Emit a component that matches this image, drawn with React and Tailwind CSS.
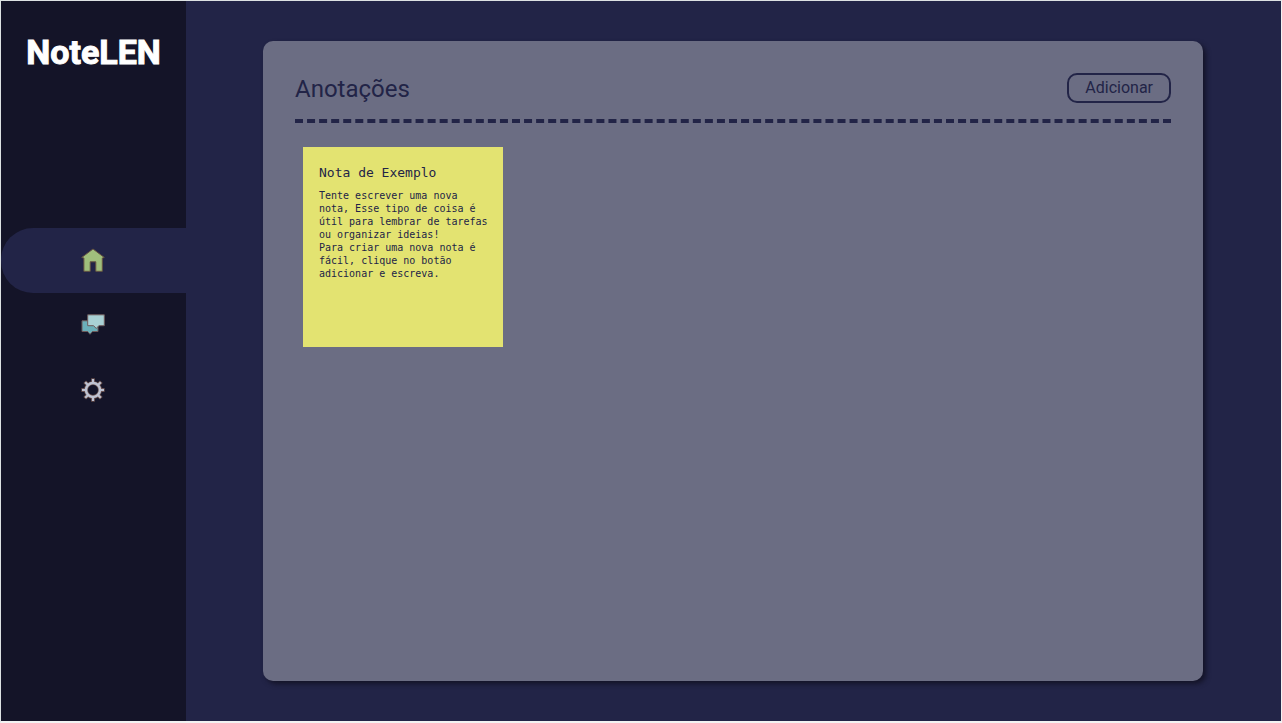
const navItems = [
  { label: "Início", icon: HomeIcon, active: true },
  { label: "Mensagens", icon: ChatIcon },
  { label: "Configurações", icon: GearIcon },
];

function HomeIcon() {
  return (
    <svg viewBox="0 0 25 25" className="size-[25px]" aria-hidden="true">
      <path
        d="M12 1 23.3 9.5 21.3 10V23.3H14.8V13.8H9.2V23.3H2.9V10L.7 9.5Z"
        fill="#a0bf7c"
        stroke="#665442"
        strokeWidth="1"
      />
    </svg>
  );
}

function ChatIcon() {
  return (
    <svg viewBox="0 0 25 25" className="size-[25px]" aria-hidden="true" stroke="#6e5a5b" strokeWidth="1">
      <path d="M1 7.8H17V18.5H11.5L9 21.3 6.6 18.5H1Z" fill="#6bafb9" />
      <path d="M6.7 1.8H23.3V12.7H17.8L15.3 15.5 12.6 12.7H6.7Z" fill="#a9d1d5" />
    </svg>
  );
}

function GearIcon() {
  const teeth = [0, 45, 90, 135, 180, 225, 270, 315];
  return (
    <svg viewBox="0 0 25 25" className="size-[25px]" aria-hidden="true">
      <g fill="none" stroke="#684f4c">
        <circle cx="12" cy="12" r="7" strokeWidth="4" />
        {teeth.map((angle) => (
          <path key={angle} d="M12 4V.3" strokeWidth="3.8" transform={`rotate(${angle} 12 12)`} />
        ))}
      </g>
      <g fill="none" stroke="#bfc3d2">
        <circle cx="12" cy="12" r="7" strokeWidth="2.5" />
        {teeth.map((angle) => (
          <path key={angle} d="M12 5V1" strokeWidth="2.2" transform={`rotate(${angle} 12 12)`} />
        ))}
      </g>
    </svg>
  );
}

function Sidebar() {
  return (
    <aside className="flex w-[185px] shrink-0 flex-col bg-[#141428]">
      <h1 className="pt-[27px] text-center font-[Roboto,sans-serif] text-[34px] leading-[48px] font-bold text-white [-webkit-text-stroke:1px_white]">
        NoteLEN
      </h1>
      <nav className="mt-[152px] flex flex-col">
        {navItems.map(({ label, icon: Icon, active }) => (
          <a
            key={label}
            href="#"
            aria-label={label}
            aria-current={active ? "page" : undefined}
            className={`flex h-[65px] items-center justify-center rounded-l-[32px] ${active ? "bg-[#222447]" : ""}`}
          >
            <Icon />
          </a>
        ))}
      </nav>
    </aside>
  );
}

function Note({ title, children }) {
  return (
    <article className="size-[200px] bg-[#e3e371] py-4 pr-3 pl-4 font-['DejaVu_Sans_Mono','Liberation_Mono',monospace] text-[#222447]">
      <h3 className="text-[13px] leading-5">{title}</h3>
      <p className="mt-1.5 text-[10px] leading-[13px]">{children}</p>
    </article>
  );
}

export default function App() {
  return (
    <div className="flex min-h-screen flex-col border border-b-2 border-[#dde2e3] border-b-[#f2f2f2] border-r-[#f2f2f2] bg-[#222447]">
      <div className="flex grow">
        <Sidebar />
        <main className="flex grow py-10 pr-[78px] pl-[77px] font-[Roboto,sans-serif] text-[#222447]">
          <section className="grow rounded-[10px] bg-[#6b6d83] p-8 shadow-[3px_3px_5px_#141428]">
            <header className="flex items-center justify-between border-b-4 border-dashed border-[#222447] pb-3.5">
              <h2 className="text-2xl leading-8">Anotações</h2>
              <button type="button" className="h-[30px] self-start rounded-[10px] border-2 border-[#222447] px-4 text-base leading-6">
                Adicionar
              </button>
            </header>
            <div className="flex flex-wrap gap-4 px-2 pt-6">
              <Note title="Nota de Exemplo">
                Tente escrever uma nova nota, Esse tipo de coisa é útil para lembrar de tarefas ou organizar ideias!
                <br />
                Para criar uma nova nota é fácil, clique no botão adicionar e escreva.
              </Note>
            </div>
          </section>
        </main>
      </div>
    </div>
  );
}
